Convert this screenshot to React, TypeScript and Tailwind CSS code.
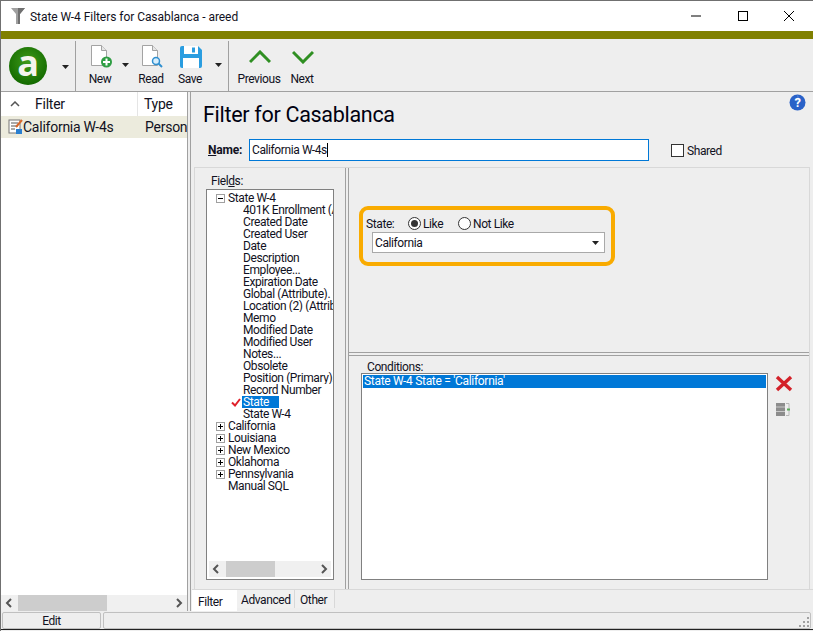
import React from "react";

const Caret = ({ className = "" }: { className?: string }) => (
  <svg viewBox="0 0 9 5" className={`w-[7px] h-[4px] shrink-0 ${className}`}><path d="M0 0h9L4.5 5z" fill="#222" /></svg>
);

const Chev = ({ d }: { d: "l" | "r" }) => (
  <svg width="8" height="10" viewBox="0 0 8 10" className="shrink-0">
    <path d={d === "l" ? "M6 1 2 5l4 4" : "M2 1l4 4-4 4"} fill="none" stroke="#555" strokeWidth="2" />
  </svg>
);

const Exp = ({ open }: { open?: boolean }) => (
  <span className="w-[9px] h-[9px] border border-[#a0a0a0] bg-white flex items-center justify-center relative shrink-0">
    <span className="w-[5px] h-px bg-black" />
    {!open && <span className="absolute w-px h-[5px] bg-black" />}
  </span>
);

const fields = ["401K Enrollment (Attribute)", "Created Date", "Created User", "Date", "Description", "Employee...", "Expiration Date", "Global (Attribute).", "Location (2) (Attribute)", "Memo", "Modified Date", "Modified User", "Notes...", "Obsolete", "Position (Primary).", "Record Number"];
const groups = ["California", "Louisiana", "New Mexico", "Oklahoma", "Pennsylvania"];

const Tool = ({ label, w, children }: { label: string; w: string; children: React.ReactNode }) => (
  <div className={`flex flex-col items-center ${w}`}>
    <div className="h-[25px] flex items-center justify-center">{children}</div>
    <span className="leading-[14px] mt-[3px] -ml-[2px]">{label}</span>
  </div>
);

export default function App() {
  return (
    <div className="w-[813px] h-[631px] overflow-hidden bg-[#eeeeee] flex flex-col border-t border-l border-[#707070] text-[12px] text-[#111122] tracking-[-0.4px]" style={{ fontFamily: 'Roboto, sans-serif' }}>
      {/* Title bar */}
      <div className="h-[30px] bg-white flex items-center shrink-0">
        <svg width="14" height="18" viewBox="0 0 14 18" className="ml-[10px]">
          <path d="M0 1h14L9 7v10H5V7z" fill="#a0a0a0" />
          <path d="M7 1h7L9 7v10H7z" fill="#707070" />
        </svg>
        <span className="ml-[5px] pt-[1px] text-[12px] tracking-[-0.05px]">State W-4 Filters for Casablanca - areed</span>
        <div className="ml-auto flex items-center pr-[1px]">
          <svg width="46" height="30" viewBox="0 0 46 30"><path d="M18 15h10" stroke="#000" /></svg>
          <svg width="46" height="30" viewBox="0 0 46 30" className="ml-[1px]"><rect x="18.5" y="10.5" width="9" height="9" fill="none" stroke="#000" /></svg>
          <svg width="46" height="30" viewBox="0 0 46 30"><path d="M18 10l10 10M28 10 18 20" stroke="#000" /></svg>
        </div>
      </div>
      <div className="h-[8px] bg-[#808000] shrink-0" />
      {/* Toolbar */}
      <div className="h-[52px] flex items-start shrink-0 border-b border-[#a0a0a0] box-content">
        <div className="w-[75px] h-[50px] mt-[2px] flex items-center border-r border-[#a0a0a0] shrink-0">
          <div className="ml-[8px] w-[38px] h-[38px] rounded-full flex items-center justify-center bg-[radial-gradient(circle_at_50%_40%,#3f9a1a,#146b00_75%)]">
            <span className="text-[#f4f4ee] font-bold text-[36px] leading-none -mt-[6px]" style={{ fontFamily: '"Open Sans", sans-serif' }}>a</span>
          </div>
          <Caret className="ml-[15px] mt-[1px]" />
        </div>
        <div className="flex h-[50px] mt-[2px] w-[153px] border-r border-[#a0a0a0] shrink-0">
          <Tool label="New" w="w-[40px] ml-[5px] mt-[3px]">
            <svg width="22" height="25" viewBox="0 0 22 25">
              <path d="M1.5 1.5h10l5 5v15h-15z" fill="#fff" stroke="#a3a3a3" />
              <path d="M11.5 1.5v5h5" fill="#e6e6e6" stroke="#a3a3a3" />
              <circle cx="16.5" cy="18" r="5.5" fill="#2f9e44" />
              <path d="M16.5 14.5v7M13 18h7" stroke="#fff" strokeWidth="2" />
            </svg>
          </Tool>
          <Caret className="mt-[22px] ml-[1px]" />
          <Tool label="Read" w="w-[40px] ml-[3px] mt-[3px]">
            <svg width="22" height="25" viewBox="0 0 22 25">
              <path d="M1.5 1.5h10l5 5v15h-15z" fill="#fff" stroke="#a3a3a3" />
              <path d="M11.5 1.5v5h5" fill="#e6e6e6" stroke="#a3a3a3" />
              <circle cx="15" cy="17" r="3.5" fill="#d8eefc" stroke="#2f8fd0" strokeWidth="1.5" />
              <path d="M17.5 19.5 21 23" stroke="#2f8fd0" strokeWidth="2" />
            </svg>
          </Tool>
          <Tool label="Save" w="w-[38px] mt-[3px]">
            <svg width="22" height="22" viewBox="0 0 22 22">
              <path d="M2 0h16l4 4v16a2 2 0 0 1-2 2H2a2 2 0 0 1-2-2V2a2 2 0 0 1 2-2z" fill="#2a9de0" />
              <rect x="4" y="0" width="14" height="8" fill="#fff" />
              <rect x="12" y="1.5" width="3" height="5" fill="#2a9de0" />
              <rect x="3" y="12" width="16" height="10" fill="#fff" />
            </svg>
          </Tool>
          <Caret className="mt-[22px] ml-[5px]" />
        </div>
        <Tool label="Previous" w="w-[60px] ml-[1px] mt-[5px]">
          <svg width="22" height="14" viewBox="0 0 22 14"><path d="M1 12 11 2l10 10" fill="none" stroke="#2f8f22" strokeWidth="3" /></svg>
        </Tool>
        <Tool label="Next" w="w-[26px] mt-[5px]">
          <svg width="22" height="14" viewBox="0 0 22 14"><path d="M1 2l10 10L21 2" fill="none" stroke="#2f8f22" strokeWidth="3" /></svg>
        </Tool>
      </div>
      {/* Main */}
      <div className="flex h-[519px] shrink-0">
        {/* Left panel */}
        <div className="w-[186px] shrink-0 flex flex-col bg-white border-r border-[#a0a0a0] box-content text-[14px] tracking-[-0.25px]">
          <div className="h-[24px] flex items-center shrink-0">
            <svg width="10" height="6" viewBox="0 0 10 6" className="ml-[9px]"><path d="M1 5l4-4 4 4" fill="none" stroke="#555" strokeWidth="1.5" /></svg>
            <span className="ml-[15px] w-[103px] h-full pt-[1px] flex items-center border-r border-[#e5e5e5]">Filter</span>
            <span className="ml-[6px] pt-[1px]">Type</span>
          </div>
          <div className="h-[22px] bg-[#ecebdd] flex items-center shrink-0 overflow-hidden whitespace-nowrap">
            <svg width="15" height="16" viewBox="0 0 15 16" className="ml-[7px] shrink-0">
              <rect x="1" y="1" width="11" height="13" fill="#fff" stroke="#777" />
              <path d="M3 4h7M3 7h7M3 10h4" stroke="#555" />
              <path d="M8 8 14 1" stroke="#d9682a" strokeWidth="2" />
              <rect x="8" y="10" width="6" height="5" fill="#2a7fd0" />
            </svg>
            <span className="w-[122px] shrink-0">California W-4s</span>
            <span>Personal</span>
          </div>
          <div className="flex-1" />
          <div className="h-[16px] bg-[#f0f0f0] flex items-center px-[4px] shrink-0">
            <Chev d="l" />
            <div className="ml-[5px] w-[89px] h-full bg-[#cdcdcd]" />
            <div className="ml-auto"><Chev d="r" /></div>
          </div>
        </div>
        {/* Right panel */}
        <div className="ml-[2px] flex-1 border-l border-[#a0a0a0] flex flex-col">
          <div className="h-[75px] flex flex-col relative shrink-0">
            <h1 className="ml-[12px] mt-[8px] text-[21.5px] leading-[30px] tracking-[-0.3px] text-[#000010]">Filter for Casablanca</h1>
            <svg width="17" height="17" viewBox="0 0 17 17" className="absolute right-[8px] top-[2px]">
              <circle cx="8.5" cy="8.5" r="8" fill="#2a62c8" />
              <path d="M8.5.5a8 8 0 0 1 0 8z" fill="#5a8de0" />
              <text x="8.5" y="13" textAnchor="middle" fontSize="13" fontWeight="700" fill="#fff">?</text>
            </svg>
            <div className="flex items-center ml-[17px] mt-[9px]">
              <span className="font-bold w-[41px] tracking-[-0.2px]"><span className="underline">N</span>ame:</span>
              <div className="w-[400px] h-[22px] border border-[#0078d7] bg-white flex items-center pl-[2px]">
                California W-4s<span className="w-px h-[14px] bg-black" />
              </div>
              <span className="ml-[22px] w-[13px] h-[13px] border border-[#333] bg-white" />
              <span className="ml-[3px] mt-[2px]">Shared</span>
            </div>
          </div>
          <div className="ml-[3px] mr-[4px] h-[422px] shrink-0 border border-[#d8d8d8] border-b-0 flex">
            {/* Fields */}
            <div className="w-[150px] shrink-0 flex flex-col">
              <div className="ml-[16px] h-[21px] pt-[6px] leading-[14px]">Fiel<span className="underline">d</span>s:</div>
              <div className="ml-[11px] w-[128px] h-[391px] border border-[#808080] bg-white flex flex-col overflow-hidden">
                <div className="flex-1 overflow-hidden pt-[2px] leading-[12px] whitespace-nowrap">
                  <div className="flex items-center h-[12px] ml-[9px]"><Exp open /><span className="ml-[3px]">State W-4</span></div>
                  {fields.map((f) => (
                    <div key={f} className="h-[12px] ml-[36px] overflow-hidden">{f}</div>
                  ))}
                  <div className="flex items-center h-[12px]">
                    <svg width="10" height="9" viewBox="0 0 10 9" className="ml-[24px] shrink-0"><path d="M1 4.5 4 7.5 9 1" fill="none" stroke="#e0202a" strokeWidth="2" /></svg>
                    <span className="ml-[1px] w-[37px] bg-[#0078d7] text-white pl-[1px] h-[12px]">State</span>
                  </div>
                  <div className="h-[12px] ml-[36px]">State W-4</div>
                  {groups.map((g) => (
                    <div key={g} className="flex items-center h-[12px] ml-[9px]"><Exp /><span className="ml-[3px]">{g}</span></div>
                  ))}
                  <div className="h-[12px] ml-[21px]">Manual SQL</div>
                </div>
                <div className="h-[16px] mx-[2px] mb-[2px] bg-[#f0f0f0] flex items-center px-[3px] shrink-0">
                  <Chev d="l" />
                  <div className="ml-[6px] w-[49px] h-full bg-[#cdcdcd]" />
                  <div className="ml-auto"><Chev d="r" /></div>
                </div>
              </div>
            </div>
            {/* Vertical splitter */}
            <div className="w-[4px] shrink-0 border-x border-[#a0a0a0]" />
            {/* Right */}
            <div className="flex-1 flex flex-col">
              <div className="h-[184px] shrink-0 pt-[38px] pl-[10px]">
                <div className="w-[256px] h-[60px] border-[4px] border-[#f9ab00] rounded-[9px] pl-[3px] pt-[6px]">
                  <div className="flex items-center h-[15px]">
                    <span className="w-[42px]">State:</span>
                    <span className="w-[13px] h-[13px] rounded-full border border-[#333] flex items-center justify-center bg-white"><span className="w-[7px] h-[7px] rounded-full bg-[#333]" /></span>
                    <span className="ml-[2px] w-[35px]">Like</span>
                    <span className="w-[13px] h-[13px] rounded-full border border-[#333] bg-white" />
                    <span className="ml-[2px]">Not Like</span>
                  </div>
                  <div className="ml-[6px] mt-[1px] w-[233px] h-[21px] border border-[#a9a9a9] bg-white flex items-center pl-[2px] pr-[5px]">
                    California
                    <Caret className="ml-auto" />
                  </div>
                </div>
              </div>
              <div className="h-[4px] shrink-0 border-y border-[#a0a0a0]" />
              <div className="flex-1 flex">
                <div className="w-[426px] shrink-0 pl-[12px]">
                  <div className="ml-[6px] h-[17px] pt-[4px] leading-[14px]">Conditions:</div>
                  <div className="w-[407px] h-[207px] border border-[#808080] bg-white p-px">
                    <div className="h-[13px] leading-[13px] bg-[#0078d7] text-white pl-[1px] tracking-[-0.3px]">State W-4 State = 'California'</div>
                  </div>
                </div>
                <div className="w-[34px] shrink-0 pt-[19px] flex flex-col">
                  <svg width="18" height="17" viewBox="0 0 18 17"><path d="M2 2l14 13M16 2 2 15" stroke="#d3222a" strokeWidth="3.4" /></svg>
                  <svg width="15" height="13" viewBox="0 0 15 13" className="ml-[1px] mt-[11px]">
                    <rect x="0" y="0" width="9" height="13" fill="#8c8c8c" />
                    <path d="M0 4h9M0 8.5h9" stroke="#c8c8c8" />
                    <path d="M10 .5h3v12h-3" fill="none" stroke="#b8b8b8" />
                    <path d="M11 6.5h3" stroke="#5aa85a" strokeWidth="2" />
                  </svg>
                </div>
              </div>
            </div>
          </div>
          {/* Tabs */}
          <div className="h-[21px] shrink-0 flex items-start border-t border-[#d8d8d8] ml-[1px] box-content">
            <div className="w-[45px] h-[21px] bg-white flex items-center pl-[6px] pt-[3px]">Filter</div>
            <div className="w-[58px] h-[18px] bg-[#f0f0f0] border-r border-[#d8d8d8] flex items-center pl-[4px] pt-[1px]">Advanced</div>
            <div className="w-[40px] h-[18px] bg-[#f0f0f0] border-r border-[#d8d8d8] flex items-center pl-[5px] pt-[1px]">Other</div>
          </div>
        </div>
      </div>
      {/* Status */}
      <div className="h-[17px] mt-[1px] shrink-0 flex items-stretch pl-[1px] pr-[2px]">
        <div className="w-[99px] border border-[#c0c0c0] rounded-[2px] flex items-center justify-center">Edit</div>
        <div className="ml-[2px] flex-1 border border-[#c0c0c0] rounded-[2px] flex items-end justify-end">
          <svg width="12" height="12" viewBox="0 0 12 12" className="shrink-0"><path d="M9 1h2v2H9zM5 5h2v2H5zM9 5h2v2H9zM1 9h2v2H1zM5 9h2v2H5zM9 9h2v2H9z" fill="#a0a0a0" /></svg>
        </div>
      </div>
      <div className="h-[1px] bg-[#222] shrink-0" />
    </div>
  );
}
